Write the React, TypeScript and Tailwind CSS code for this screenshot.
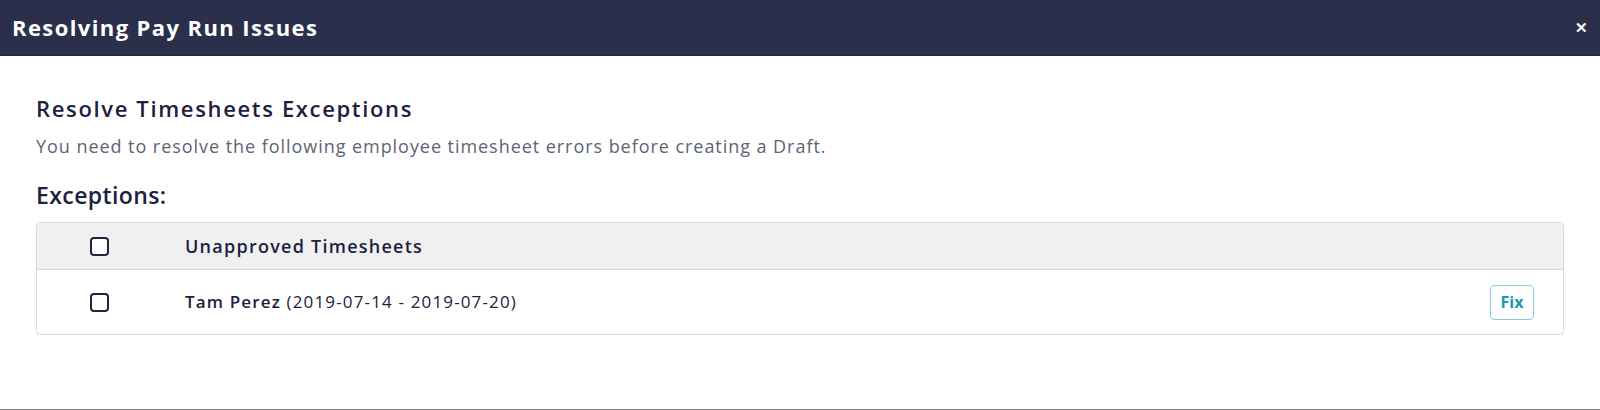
const Checkbox = () => {
  return <span className="block w-[19px] h-[19px] rounded-[4px] border-2 border-[#1f2340] bg-white"></span>;
};

const App = () => {
  return (
    <div className="h-[410px] w-[1600px] bg-white border-b border-[#7a7a7a] flex flex-col font-['Open_Sans',sans-serif] text-[#1d2140]">
      <div className="h-[56px] bg-[#2a2f4b] border-b border-[#232741] flex items-center justify-between pl-[12px] pr-[12px]">
        <h1 className="text-white text-[22px] font-bold tracking-[1.4px]">Resolving Pay Run Issues</h1>
        <button className="text-white text-[15px] font-bold leading-none">✕</button>
      </div>

      <div className="px-[36px] pt-[38px]">
        <h2 className="text-[22px] font-semibold leading-[28px] tracking-[1.65px]">Resolve Timesheets Exceptions</h2>
        <p className="mt-[12px] text-[18px] text-[#5d6474] leading-[24px] tracking-[0.95px]">
          You need to resolve the following employee timesheet errors before creating a Draft.
        </p>
        <h3 className="mt-[23px] text-[23px] font-semibold leading-[28px] tracking-[0.4px]">Exceptions:</h3>

        <div className="mt-[13px] border border-[#dcdcdc] rounded-[4px] overflow-hidden">
          <div className="h-[47px] bg-[#f0f0f0] border-b border-[#d6d6d6] flex items-center pl-[53px]">
            <Checkbox />
            <span className="ml-[76px] text-[18px] font-semibold tracking-[1.25px]">Unapproved Timesheets</span>
          </div>
          <div className="h-[64px] flex items-center pl-[53px] pr-[29px]">
            <Checkbox />
            <span className="ml-[76px] flex-1 text-[17px] tracking-[1.15px]">
              <span className="font-semibold">Tam Perez</span> (2019-07-14 - 2019-07-20)
            </span>
            <button className="h-[35px] w-[44px] rounded-[4px] border border-[#8ccbd8] text-[#1899b0] text-[16px] font-bold">
              Fix
            </button>
          </div>
        </div>
      </div>
    </div>
  );
};

export default App;
